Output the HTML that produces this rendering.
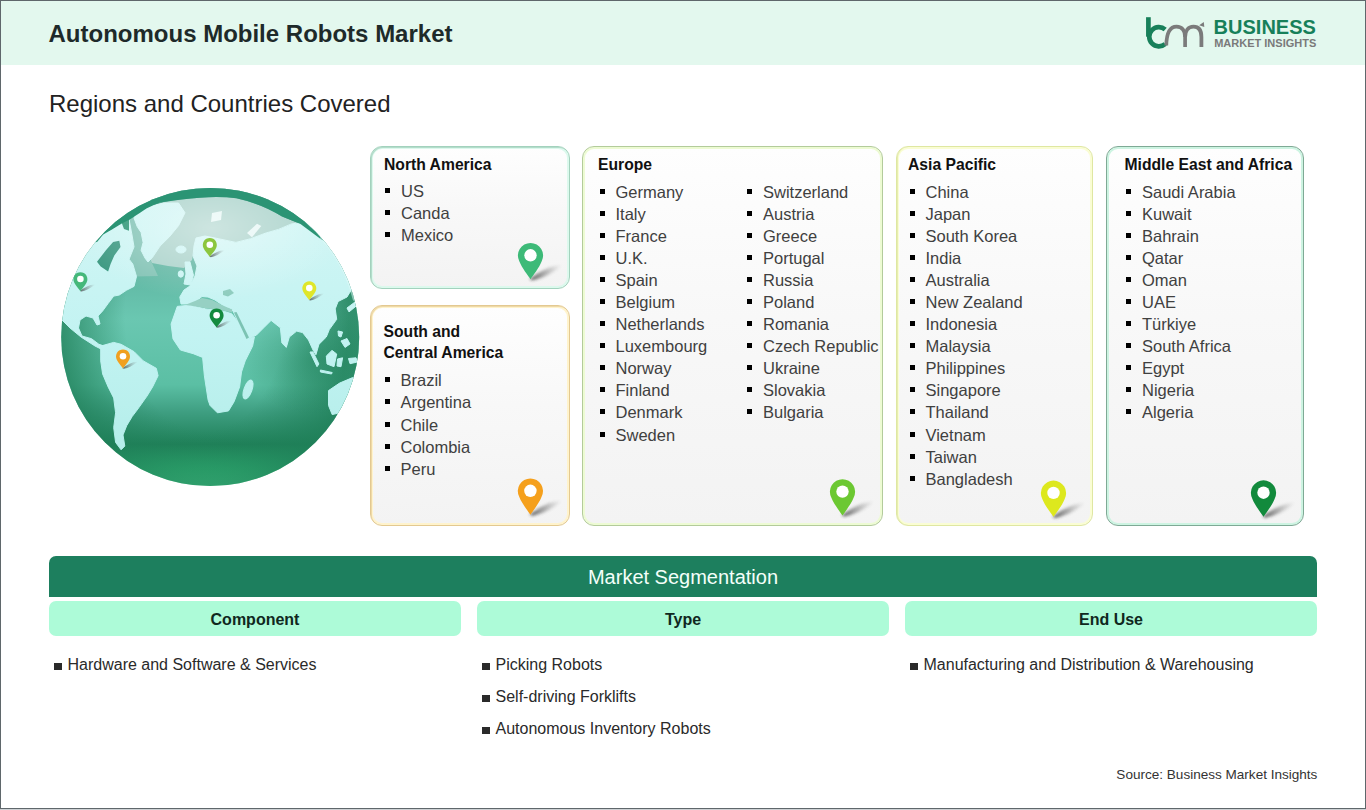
<!DOCTYPE html>
<html><head><meta charset="utf-8">
<style>
html,body{margin:0;padding:0;}
body{width:1366px;height:810px;background:#cdd1d4;position:relative;overflow:hidden;font-family:"Liberation Sans",sans-serif;}
#frame{position:absolute;left:0;top:0;width:1364px;height:807px;border:1px solid #5f676b;background:#ffffff;overflow:hidden;}
.abs{position:absolute;white-space:nowrap;}
#hdr{position:absolute;left:0;top:0;width:1364px;height:64px;background:#e3f8ee;}
.title{font-weight:bold;font-size:24px;line-height:24px;color:#1e2a2a;}
.sub{font-size:24px;line-height:24px;color:#222;}
.card{position:absolute;box-sizing:border-box;border:1px solid #9fdcc0;border-radius:12px;background:linear-gradient(180deg,#fefefe 0%,#f8f8f8 45%,#f3f3f3 100%);}
.h{position:absolute;font-weight:bold;font-size:15.7px;line-height:21px;color:#111;white-space:nowrap;}
.list{position:absolute;font-size:16.5px;line-height:22.08px;color:#404040;white-space:nowrap;}
.list div{position:relative;padding-left:16px;}
.list div:before{content:"";position:absolute;left:0;top:8px;width:5px;height:5px;background:#000;}
.seg{position:absolute;font-size:16px;line-height:32px;color:#2a2a2a;white-space:nowrap;}
.seg div{position:relative;padding-left:13.5px;}
.seg div:before{content:"";position:absolute;left:0;top:14px;width:8px;height:6.7px;background:#2a2a2a;}
.colh{position:absolute;top:601px;height:34.6px;width:412px;background:#adfbd8;border-radius:7px;font-weight:bold;font-size:16px;line-height:34.6px;padding-top:1.6px;box-sizing:border-box;text-align:center;color:#10281e;}
</style></head>
<body>
<div id="frame">
  <div id="hdr"></div>
</div>
<!-- header -->
<div class="abs title" style="left:48.5px;top:22.1px;">Autonomous Mobile Robots Market</div>
<div class="abs sub" style="left:49px;top:91.9px;">Regions and Countries Covered</div>

<!-- logo -->
<svg class="abs" style="left:0;top:0" width="1366" height="70" viewBox="0 0 1366 70">
  <g fill="none" stroke-linecap="butt">
    <path d="M1148.4,17.2 L1148.4,36.7" stroke="#18805a" stroke-width="4.7"/>
    <path d="M1165.2,29.5 A9.6,9.6 0 1 0 1165.2,43.9" stroke="#18805a" stroke-width="4.7"/>
    <path d="M1166.3,45.5 C1166.5,33 1170,26.6 1176.5,26.6 C1182.5,26.6 1185.1,31 1185.1,37 L1185.1,47" stroke="#7b7b7b" stroke-width="3.7"/>
    <path d="M1185.1,37 C1185.1,31 1188,26.6 1193.5,26.6 C1199.5,26.6 1201.4,31 1201.4,37 L1201.4,47" stroke="#7b7b7b" stroke-width="3.8"/>
  </g>
  <path d="M1199.2,25.2 L1203.8,22 L1204.3,27 Z" fill="#7b7b7b"/>
</svg>
<div class="abs" style="left:1213.6px;top:17.2px;font-weight:bold;font-size:20px;line-height:20px;color:#17805a;">BUSINESS</div>
<div class="abs" style="left:1214.2px;top:37.8px;font-weight:bold;font-size:11px;line-height:11px;color:#7a7a7a;letter-spacing:0px;">MARKET INSIGHTS</div>

<!-- cards -->
<div class="card" style="left:370px;top:146px;width:200px;height:143px;border-color:#a3d2bd;box-shadow:inset 1px 1px 0 #b4dccb,inset 0 0 0 2px #dcf9ed;"></div>
<div class="card" style="left:370px;top:305px;width:200px;height:221px;border-color:#e3c991;box-shadow:inset 1px 1px 0 #eed9a8,inset 0 0 0 2px #fff3cc;"></div>
<div class="card" style="left:582px;top:146px;width:301px;height:380px;border-color:#b3cb9b;box-shadow:inset 0 0 0 2px #edfbd3;"></div>
<div class="card" style="left:896px;top:146px;width:197px;height:380px;border-color:#dfe7a2;box-shadow:inset 1px 0 0 #e6eeb0,inset 0 0 0 2px #fafdd4;"></div>
<div class="card" style="left:1106px;top:146px;width:198px;height:380px;border-color:#7fa995;box-shadow:inset 0 0 0 2px #cdf4e2;"></div>

<div class="h" style="left:384px;top:153.7px;">North America</div>
<div class="list" style="left:385px;top:179.5px;"><div>US</div><div>Canda</div><div>Mexico</div></div>

<div class="h" style="left:383.5px;top:320.6px;">South and<br>Central America</div>
<div class="list" style="left:384.5px;top:369.4px;"><div>Brazil</div><div>Argentina</div><div>Chile</div><div>Colombia</div><div>Peru</div></div>

<div class="h" style="left:598px;top:153.9px;">Europe</div>
<div class="list" style="left:599.5px;top:180.7px;"><div>Germany</div><div>Italy</div><div>France</div><div>U.K.</div><div>Spain</div><div>Belgium</div><div>Netherlands</div><div>Luxembourg</div><div>Norway</div><div>Finland</div><div>Denmark</div><div>Sweden</div></div>
<div class="list" style="left:747px;top:180.7px;"><div>Switzerland</div><div>Austria</div><div>Greece</div><div>Portugal</div><div>Russia</div><div>Poland</div><div>Romania</div><div>Czech Republic</div><div>Ukraine</div><div>Slovakia</div><div>Bulgaria</div></div>

<div class="h" style="left:908px;top:153.9px;">Asia Pacific</div>
<div class="list" style="left:909.5px;top:180.7px;"><div>China</div><div>Japan</div><div>South Korea</div><div>India</div><div>Australia</div><div>New Zealand</div><div>Indonesia</div><div>Malaysia</div><div>Philippines</div><div>Singapore</div><div>Thailand</div><div>Vietnam</div><div>Taiwan</div><div>Bangladesh</div></div>

<div class="h" style="left:1124.5px;top:153.9px;">Middle East and Africa</div>
<div class="list" style="left:1126px;top:180.7px;"><div>Saudi Arabia</div><div>Kuwait</div><div>Bahrain</div><div>Qatar</div><div>Oman</div><div>UAE</div><div>Türkiye</div><div>South Africa</div><div>Egypt</div><div>Nigeria</div><div>Algeria</div></div>

<!-- segmentation -->
<div class="abs" style="left:49px;top:556px;width:1268px;height:40.5px;background:#1d7f5e;border-radius:7px 7px 0 0;color:#f4fffa;font-size:20px;line-height:42.5px;text-align:center;">Market Segmentation</div>
<div class="colh" style="left:49px;">Component</div>
<div class="colh" style="left:477px;">Type</div>
<div class="colh" style="left:905px;">End Use</div>
<div class="seg" style="left:54px;top:649.1px;"><div>Hardware and Software &amp; Services</div></div>
<div class="seg" style="left:482px;top:649.1px;"><div>Picking Robots</div><div>Self-driving Forklifts</div><div>Autonomous Inventory Robots</div></div>
<div class="seg" style="left:910px;top:649.1px;"><div>Manufacturing and Distribution &amp; Warehousing</div></div>
<div class="abs" style="right:48.6px;top:767.7px;font-size:13.55px;line-height:14px;color:#333;">Source: Business Market Insights</div>

<svg class="abs" style="left:0;top:0" width="380" height="500" viewBox="0 0 380 500">
  <defs>
    <clipPath id="gc"><circle cx="210.2" cy="337" r="149"/></clipPath>
    <linearGradient id="ocean" x1="0" y1="188" x2="0" y2="486" gradientUnits="userSpaceOnUse">
      <stop offset="0" stop-color="#3a9c82"/>
      <stop offset="0.24" stop-color="#5eb3a0"/>
      <stop offset="0.44" stop-color="#6ac7b1"/>
      <stop offset="0.66" stop-color="#5bbfa4"/>
      <stop offset="0.75" stop-color="#3f9f82"/>
      <stop offset="0.86" stop-color="#1f8058"/>
      <stop offset="0.94" stop-color="#2ca56c"/>
      <stop offset="1" stop-color="#3cb87c"/>
    </linearGradient>
    <radialGradient id="vig" cx="0" cy="0" r="1" gradientUnits="userSpaceOnUse" gradientTransform="translate(205 315) scale(160 230)">
      <stop offset="0" stop-color="#1f7f58" stop-opacity="0"/>
      <stop offset="0.5" stop-color="#1f7f58" stop-opacity="0"/>
      <stop offset="0.9" stop-color="#1f7f58" stop-opacity="0.75"/>
      <stop offset="1" stop-color="#1f7f58" stop-opacity="0.75"/>
    </radialGradient>
    <radialGradient id="rdark" cx="0" cy="0" r="1" gradientUnits="userSpaceOnUse" gradientTransform="translate(315 360) scale(70 55)">
      <stop offset="0" stop-color="#1f7f58" stop-opacity="0.5"/>
      <stop offset="1" stop-color="#1f7f58" stop-opacity="0"/>
    </radialGradient>
    <filter id="gblur" x="-20%" y="-20%" width="140%" height="140%"><feGaussianBlur stdDeviation="4"/></filter>
    <radialGradient id="hl" cx="0" cy="0" r="1" gradientUnits="userSpaceOnUse" gradientTransform="translate(212 228) scale(135 72)">
      <stop offset="0" stop-color="#ffffff" stop-opacity="0.42"/>
      <stop offset="1" stop-color="#ffffff" stop-opacity="0"/>
    </radialGradient>
    <linearGradient id="landg" x1="0" y1="190" x2="0" y2="486" gradientUnits="userSpaceOnUse">
      <stop offset="0" stop-color="#d4f6f5"/>
      <stop offset="0.5" stop-color="#c2f3f2"/>
      <stop offset="1" stop-color="#b0ece7"/>
    </linearGradient>
  </defs>
  <g clip-path="url(#gc)">
    <rect x="55" y="180" width="320" height="320" fill="url(#ocean)"/>
    <rect x="55" y="180" width="320" height="320" fill="url(#vig)"/>
    <rect x="55" y="180" width="320" height="320" fill="url(#rdark)"/>
    <!-- arctic gray-teal -->
    <path d="M139,213.5 Q160,200 181.5,199.5 Q215,195 236.4,198.3 Q262,204 282,216.6 L300.5,224 L322,240 L313.7,227.6 L306.3,222 L291.5,223.9 L278.5,229.4 L265.6,233.1 L250.7,238.7 L235.9,242.4 L215,238 L196,238 L194,250 L192,260 L184,268 L168,266 L152,263 L140,240 Z" fill="#a9d2ca"/>
    <!-- Baffin channel medium teal -->
    <path d="M129,220 L139,213.5 L144,232 L145.2,246.9 L146.4,256.7 L151.4,261.7 L158,276 L136.5,276.5 L132.8,264.1 L129.1,259.2 L134,246.9 L132,235 Z" fill="#82c3b5"/>
    <g fill="url(#landg)" stroke="url(#landg)" stroke-width="1" stroke-linejoin="round">
      <!-- North America + Central America -->
      <path d="M40,330 L40,250 L90,238 L97,241.9 L103.2,234.5 L111.9,229.6 L121.7,223.4 L129.1,219.7 L132,235 L134,246.9 L129.1,259.2 L132.8,264.1 L136.5,276.5 L134,286.4 L126.7,290.1 L119.3,295 L113.7,296.1 L108.1,303.5 L102.6,311 L98,316 L100,324 L97,325 L93,318 L86,316 L80,320 L78.5,328 L82,336 L91.5,338.7 L98.9,344.3 L104.4,346.1 L102,349.5 L95,346 L81,337 L70,328 L64,322 L58,316 Z"/>
      <!-- South America -->
      <path d="M100.7,346.1 L113.7,342.4 L121.1,344.3 L134.1,351.7 L143.3,360.9 L156.3,368.3 L158.1,375.7 L152.6,386.9 L147,396.1 L137.8,409.1 L132.2,416.5 L126.7,425.7 L123,435 L124.8,446.1 L121.1,449.8 L115.6,442.4 L113.7,427.6 L115.6,412.8 L113.7,398 L108.1,386.9 L102.6,373.9 L100.7,360.9 Z"/>
      <!-- Greenland -->
      <path d="M137,212 L147,207 L163.7,203 L178.5,203 L185,212.8 L178.5,225.7 L169.3,236.9 L160,246.1 L152.6,257.2 L148,262 L145.1,258.2 L141.1,250.3 L143.1,242.4 L141.1,232.5 L137.2,226.6 L134,218 Z"/>
      <!-- Eurasia incl. Arabia, India, SE Asia -->
      <path d="M196,238 L205,236 L215,238 L235.9,242.4 L250.7,238.7 L265.6,233.1 L278.5,229.4 L291.5,223.9 L306.3,222 L313.7,227.6 L330,232 L375,262 L375,289 L351.5,289.6 L347,297 L338.1,301.5 L335.2,308.9 L336.7,319.3 L329.3,329.6 L326.3,337 L318.9,344.4 L315.9,354.8 L313,350 L308.5,340 L302.6,332.6 L296.7,331.1 L289.3,337 L286.3,347.4 L281.9,343 L280.4,327.8 L271.1,320.4 L263.7,327.8 L256.3,335.2 L247,338.9 L238,322 L234,313 L231.7,308.9 L224.3,306.4 L215,300 L208,297 L202,296.5 L195,302 L189.7,304 L181,304 L179.8,297 L184,290 L190,286 L195,276 L197,266 L193,256 L194,246 Z"/>
      <!-- Africa -->
      <path d="M177.3,306.4 L189.7,305.2 L205.7,308.9 L224.3,311.4 L231.7,313.8 L238,322 L243,330 L247,338.9 L254.4,336.9 L252.6,346.1 L245.2,360.9 L241.5,372 L239.6,386.9 L234.1,401.7 L228.5,410.9 L217.4,412.8 L210,405.4 L208.1,400 L204.4,375.9 L202.6,357.4 L193.3,353.7 L180.4,350 L173,338.9 L171.1,324.1 Z"/>
      <ellipse cx="248" cy="389.5" rx="4" ry="10" transform="rotate(20 248 389.5)"/>
      <!-- UK, Ireland, Iceland -->
      <path d="M185,262 L190,262 L193.4,275 L191,285 L184,284 L186,274 Z"/>
      <ellipse cx="180.8" cy="274" rx="2.6" ry="3.2"/>
      <ellipse cx="181" cy="249.5" rx="5" ry="3.5"/>
      <!-- Australia -->
      <path d="M328.5,390.6 L339.6,383.1 L352.6,377.6 L362,378 L362,390 L350.7,394.3 L339.6,412.8 L332.2,414.6 L328.5,405.4 Z"/>
      <!-- Indonesia etc -->
      <path d="M310,352 L313,351.9 L318.9,364 L317,366.7 Z"/>
      <path d="M326.3,356 L332,350.4 L336.7,354 L334,366.7 L327,364 Z"/>
      <path d="M337.5,359 L342.6,357.8 L341,366.7 L337,366 Z"/>
      <path d="M338,331 L342.6,332 L341,337 L338.5,336 Z"/>
      <path d="M341,341 L347,338.5 L350,344 L345,347.4 Z"/>
      <path d="M348.5,358.5 L356,357.8 L357.4,362 L350,363.7 Z"/>
      <path d="M320.4,370 L332.2,372.5 L331.5,374 L320.4,372 Z"/>
      <!-- Japan -->
      <path d="M347,308 L355,302 L357.4,305 L349,311.9 Z"/>
    </g>
    <!-- water over land -->
    <path d="M97,261.7 L105.7,250.6 L113.1,241.9 L119.3,240.7 L120.5,246.9 L114.3,255.5 L110.6,264.1 L108.1,271.5 L100.7,266.6 Z" fill="#3f9a83"/>
    <path d="M120.5,219.7 L129,219 L129,230.8 L124,229 Z" fill="#2b9474"/>
    <path d="M234,312.5 L236.5,312 L249,337.5 L246.5,339 Z" fill="#7cc3b3"/>
    <path d="M185,305 L195,301 L202,298 L212,300 L224,306 L232,309.5 L232,312.5 L224,310.8 L206,308.3 L190,305.6 Z" fill="#96d0c3"/>
    <path d="M223,291 L230,289 L234,293 L228,296.5 L223,295 Z" fill="#8ccbbd"/>
    
    <!-- arctic islands -->
    <g fill="#e6f7f5">
      <path d="M212,213 L222,211 L221,220 L211,222 Z"/>
      <path d="M247,233 L257,223.7 L261.3,226 L252,237.3 Z"/>
    </g>
    <!-- top highlight -->
    <rect x="55" y="180" width="320" height="140" fill="url(#hl)"/>
    <!-- dark rim -->
    
    <path d="M60,180 L332,180 L332,242 L322,240 L300.5,224 L282,216.6 Q262,204 236.4,198.3 Q215,195 181.5,199.5 L160,202.4 L153.8,204.9 L146.4,208.6 L139,213.5 L129.1,219.7 L121.7,223.4 L111.9,229.6 L103.2,234.5 L97,241.9 L60,245 Z" fill="#2b9474"/>
    
    <!-- right edge highlight -->
    <path d="M322,236 A149,149 0 0 1 356,300" fill="none" stroke="#e4fbfb" stroke-opacity="0.5" stroke-width="6"/>
    <!-- bottom rim light -->
    
  </g>
<defs><filter id="psh2" x="-50%" y="-100%" width="200%" height="300%"><feGaussianBlur stdDeviation="0.7"/></filter></defs>
<path d="M79.9,291 C83.4,288 89.4,284.5 95.4,284.5 C90.4,288 85.4,291 81.4,291.5 Z" fill="url(#shg)" filter="url(#psh2)" opacity="0.75"/>
<path d="M80.4,291 C79.4,289.5 75.4,285 74.2,282.4 A7,7 0 1 1 86.60000000000001,282.4 C85.4,285 81.4,289.5 80.4,291 Z" fill="#45b87a"/>
<circle cx="80.4" cy="279" r="3.3" fill="#ffffff"/>
<path d="M209.3,256.8 C212.8,253.8 218.8,250.3 224.8,250.3 C219.8,253.8 214.8,256.8 210.8,257.3 Z" fill="url(#shg)" filter="url(#psh2)" opacity="0.75"/>
<path d="M209.8,256.8 C208.8,255.3 204.8,250.8 203.60000000000002,248.20000000000002 A7,7 0 1 1 216.0,248.20000000000002 C214.8,250.8 210.8,255.3 209.8,256.8 Z" fill="#8cc63e"/>
<circle cx="209.8" cy="244.8" r="3.3" fill="#ffffff"/>
<path d="M308.8,300.1 C312.3,297.1 318.3,293.6 324.3,293.6 C319.3,297.1 314.3,300.1 310.3,300.6 Z" fill="url(#shg)" filter="url(#psh2)" opacity="0.75"/>
<path d="M309.3,300.1 C308.3,298.6 304.3,294.1 303.1,291.5 A7,7 0 1 1 315.5,291.5 C314.3,294.1 310.3,298.6 309.3,300.1 Z" fill="#dfe62a"/>
<circle cx="309.3" cy="288.1" r="3.3" fill="#ffffff"/>
<path d="M216.1,327.3 C219.6,324.3 225.6,320.8 231.6,320.8 C226.6,324.3 221.6,327.3 217.6,327.8 Z" fill="url(#shg)" filter="url(#psh2)" opacity="0.75"/>
<path d="M216.6,327.3 C215.6,325.8 211.6,321.3 210.4,318.7 A7,7 0 1 1 222.79999999999998,318.7 C221.6,321.3 217.6,325.8 216.6,327.3 Z" fill="#138a3e"/>
<circle cx="216.6" cy="315.3" r="3.3" fill="#ffffff"/>
<path d="M122.5,368.3 C126,365.3 132,361.8 138,361.8 C133,365.3 128,368.3 124,368.8 Z" fill="url(#shg)" filter="url(#psh2)" opacity="0.75"/>
<path d="M123,368.3 C122,366.8 118,362.3 116.8,359.7 A7,7 0 1 1 129.2,359.7 C128,362.3 124,366.8 123,368.3 Z" fill="#f0a020"/>
<circle cx="123" cy="356.3" r="3.3" fill="#ffffff"/>
</svg>

<svg class="abs" style="left:0;top:0" width="1366" height="560" viewBox="0 0 1366 560">
<defs><filter id="psh" x="-50%" y="-100%" width="200%" height="300%"><feGaussianBlur stdDeviation="1.6"/></filter>
<linearGradient id="shg" x1="0" y1="0" x2="1" y2="0"><stop offset="0" stop-color="#222" stop-opacity="0.9"/><stop offset="1" stop-color="#777" stop-opacity="0"/></linearGradient></defs>
<path d="M529.5,279.3 C538.5,272.3 550.5,265.3 562.5,265.3 C555.5,271.3 543.5,278.3 532.5,280.3 Z" fill="url(#shg)" filter="url(#psh)" opacity="0.85"/>
<path d="M530.5,279.3 C528.5,276.3 521.5,267.3 519.3,261.3 A12.6,12.6 0 1 1 541.7,261.3 C539.5,267.3 532.5,276.3 530.5,279.3 Z" fill="#3dba78"/>
<circle cx="530.5" cy="255.3" r="6.2" fill="#ffffff"/>
<path d="M529.4,514.8 C538.4,507.79999999999995 550.4,500.79999999999995 562.4,500.79999999999995 C555.4,506.79999999999995 543.4,513.8 532.4,515.8 Z" fill="url(#shg)" filter="url(#psh)" opacity="0.85"/>
<path d="M530.4,514.8 C528.4,511.79999999999995 521.4,502.8 519.1999999999999,496.8 A12.6,12.6 0 1 1 541.6,496.8 C539.4,502.8 532.4,511.79999999999995 530.4,514.8 Z" fill="#f5a01c"/>
<circle cx="530.4" cy="490.8" r="6.2" fill="#ffffff"/>
<path d="M841.5,515.6 C850.5,508.6 862.5,501.6 874.5,501.6 C867.5,507.6 855.5,514.6 844.5,516.6 Z" fill="url(#shg)" filter="url(#psh)" opacity="0.85"/>
<path d="M842.5,515.6 C840.5,512.6 833.5,503.6 831.3,497.6 A12.6,12.6 0 1 1 853.7,497.6 C851.5,503.6 844.5,512.6 842.5,515.6 Z" fill="#6cc832"/>
<circle cx="842.5" cy="491.6" r="6.2" fill="#ffffff"/>
<path d="M1052.5,516.9 C1061.5,509.9 1073.5,502.9 1085.5,502.9 C1078.5,508.9 1066.5,515.9 1055.5,517.9 Z" fill="url(#shg)" filter="url(#psh)" opacity="0.85"/>
<path d="M1053.5,516.9 C1051.5,513.9 1044.5,504.9 1042.3,498.9 A12.6,12.6 0 1 1 1064.7,498.9 C1062.5,504.9 1055.5,513.9 1053.5,516.9 Z" fill="#dde81e"/>
<circle cx="1053.5" cy="492.9" r="6.2" fill="#ffffff"/>
<path d="M1262.5,516.7 C1271.5,509.70000000000005 1283.5,502.70000000000005 1295.5,502.70000000000005 C1288.5,508.70000000000005 1276.5,515.7 1265.5,517.7 Z" fill="url(#shg)" filter="url(#psh)" opacity="0.85"/>
<path d="M1263.5,516.7 C1261.5,513.7 1254.5,504.7 1252.3,498.7 A12.6,12.6 0 1 1 1274.7,498.7 C1272.5,504.7 1265.5,513.7 1263.5,516.7 Z" fill="#128a3c"/>
<circle cx="1263.5" cy="492.7" r="6.2" fill="#ffffff"/>
</svg>
</body></html>
